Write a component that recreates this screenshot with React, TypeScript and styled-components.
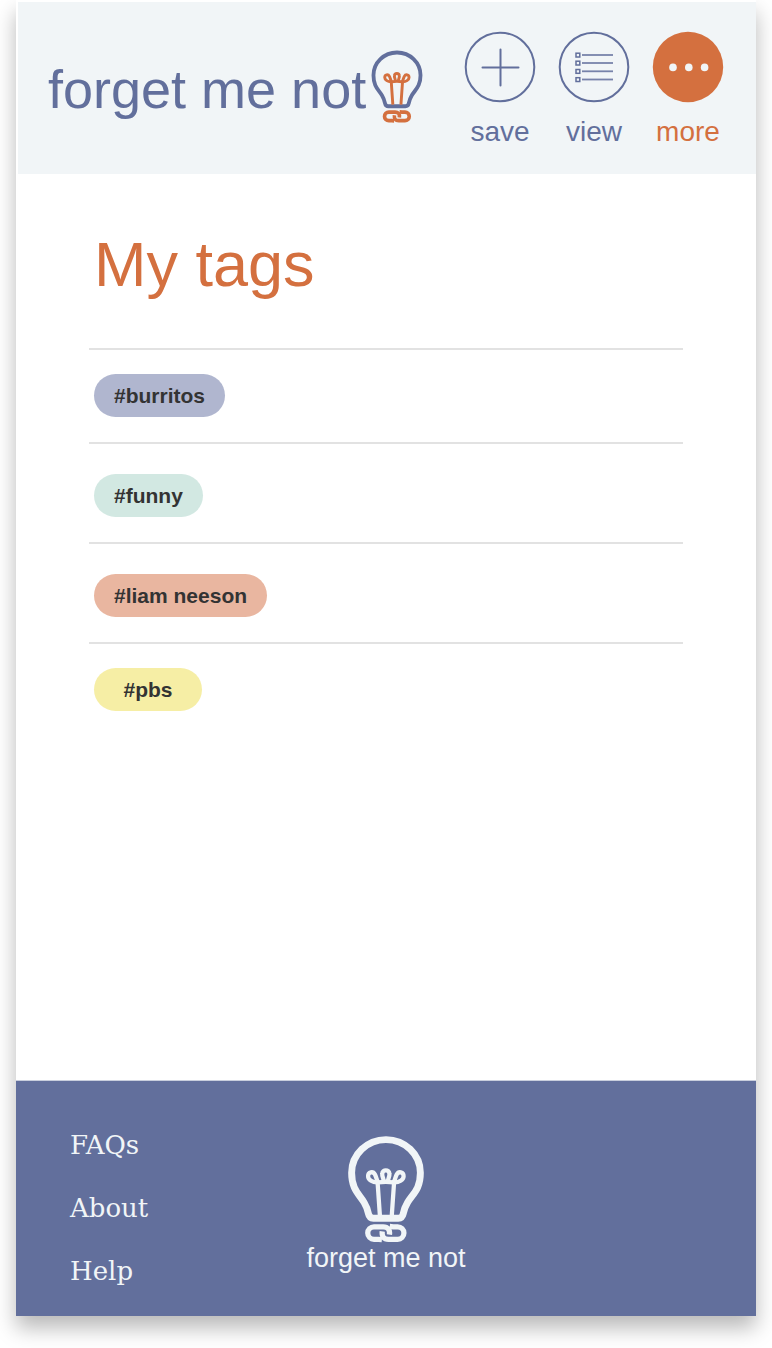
import React from "react";
import styled, { createGlobalStyle } from "styled-components";

const color = {
  indigo: "#626f9c",
  orange: "#d4703f",
  mist: "#f1f5f7",
  rule: "#e2e2e2",
  ink: "#333333",
};

const sans = `"Liberation Sans", Arial, sans-serif`;
const slab = `"DejaVu Serif", serif`;

const GlobalStyle = createGlobalStyle`
  *, *::before, *::after { box-sizing: border-box; }
  body { margin: 0; background: #fff; font-family: ${sans}; }
`;

const Card = styled.div`
  display: flex;
  flex-direction: column;
  min-height: calc(100vh - 32px);
  margin: 0 16px 32px;
  background: #fff;
  box-shadow: 0 12px 20px rgba(0, 0, 0, 0.28);
`;

const Header = styled.header`
  display: flex;
  flex-wrap: wrap;
  justify-content: space-between;
  align-items: flex-start;
  gap: 24px;
  min-height: 172px;
  margin: 2px 0 0 2px;
  padding: 30px 33px 24px 30px;
  background: ${color.mist};
`;

const Brand = styled.a`
  display: flex;
  align-items: flex-start;
  gap: 5px;
  padding-top: 18px;
  color: ${color.indigo};
  text-decoration: none;
`;

const BrandName = styled.span<{ $large?: boolean }>`
  font-size: ${(p) => (p.$large ? 54 : 27)}px;
  line-height: ${(p) => (p.$large ? 78 : 30)}px;
  white-space: nowrap;
`;

const BulbSvg = styled.svg<{ $width: number }>`
  display: block;
  flex: none;
  width: ${(p) => p.$width}px;
  height: auto;
`;

const Nav = styled.nav`
  display: flex;
  gap: 24px;
`;

const NavButton = styled.button<{ $active?: boolean }>`
  display: flex;
  flex-direction: column;
  align-items: center;
  gap: 12px;
  width: 70px;
  padding: 0;
  border: 0;
  background: none;
  color: ${(p) => (p.$active ? color.orange : color.indigo)};
  font-family: ${sans};
  font-size: 28px;
  line-height: 36px;
  cursor: pointer;
`;

const NavIcon = styled.svg`
  display: block;
  width: 70px;
  height: 70px;
  overflow: visible;
`;

const Main = styled.main`
  flex: 1;
  padding: 48px 73px;
`;

const Title = styled.h1`
  margin: 0 0 42px;
  padding-left: 5px;
  color: ${color.orange};
  font-size: 63px;
  font-weight: 400;
  line-height: 84px;
`;

const TagList = styled.ul`
  margin: 0;
  padding: 0;
  list-style: none;
`;

const TagRow = styled.li<{ $roomy?: boolean }>`
  display: flex;
  padding: ${(p) => (p.$roomy ? 30 : 24)}px 5px 25px;
  border-top: 2px solid ${color.rule};
`;

const Tag = styled.a<{ $fill: string }>`
  min-width: 108px;
  padding: 0 20px;
  border-radius: 22px;
  background: ${(p) => p.$fill};
  color: ${color.ink};
  font-size: 21px;
  font-weight: 700;
  line-height: 43px;
  text-align: center;
  text-decoration: none;
`;

const Footer = styled.footer`
  display: grid;
  grid-template-columns: 1fr auto 1fr;
  min-height: 236px;
  padding: 46px 54px 26px;
  border-top: 1px solid #c9cedd;
  background: ${color.indigo};
`;

const FooterLinks = styled.nav`
  display: flex;
  flex-direction: column;
  align-items: flex-start;
  gap: 27px;
`;

const FooterLink = styled.a`
  color: ${color.mist};
  font-family: ${slab};
  font-size: 26px;
  line-height: 36px;
  text-decoration: none;
`;

const FooterBrand = styled.a`
  display: flex;
  flex-direction: column;
  align-items: center;
  padding-top: 9px;
  color: ${color.mist};
  text-decoration: none;
`;

type BulbProps = {
  width: number;
  glass: string;
  filament: string;
  glassWidth: number;
};

function Bulb({ width, glass, filament, glassWidth }: BulbProps) {
  return (
    <BulbSvg $width={width} viewBox="173 46 231 326" fill="none" aria-hidden="true">
      <path
        stroke={glass}
        strokeWidth={glassWidth}
        strokeLinejoin="round"
        d="M184 158C184 208 206 222 222 248C232 265 233 272 235 282Q238 296 250 296H326Q338 296 341 282C343 272 344 265 354 248C370 222 393 208 393 158A104.5 101 0 0 0 184 158Z"
      />
      <g stroke={filament} strokeWidth="13" strokeLinejoin="round">
        <path d="M263 188L270 289M313 188L306 289" />
        <path d="M264 187C248 188 234 179 234 168C234 155 249 152 255 163C259 171 260 179 264 187Q288 184 312 187C316 179 317 171 321 163C327 152 342 155 342 168C342 179 328 188 312 187" />
        <path d="M282 187C283 177 276 170 277 161C278 147 298 147 299 161C300 170 293 177 294 187" />
      </g>
      <g stroke={filament} strokeWidth="16">
        <path d="M276 361L266 360H252A19 19 0 0 1 252 322H280C294 322 301 330 299 346" />
        <path d="M300 321L310 322H324A19 19 0 0 1 324 360H296C282 360 275 352 277 336" />
      </g>
    </BulbSvg>
  );
}

function SaveIcon() {
  return (
    <NavIcon viewBox="-35 -35 70 70" fill="none" stroke="currentColor" strokeWidth="2" aria-hidden="true">
      <circle r="34.3" />
      <path d="M-17.5 .5H18.5M.5 -17.5V18.5" strokeLinecap="round" />
    </NavIcon>
  );
}

function ViewIcon() {
  return (
    <NavIcon viewBox="-35 -35 70 70" fill="none" stroke="currentColor" aria-hidden="true">
      <circle r="34.3" strokeWidth="2" />
      {[-12, -4, 4.3, 12.5].map((y) => (
        <g key={y}>
          <rect x="-18" y={y - 1.8} width="3.8" height="3.8" strokeWidth="1.5" />
          <path d={`M-12 ${y}H19`} strokeWidth="1.8" opacity="0.85" />
        </g>
      ))}
    </NavIcon>
  );
}

function MoreIcon() {
  return (
    <NavIcon viewBox="-35 -35 70 70" aria-hidden="true">
      <circle r="35.2" fill={color.orange} />
      {[-15, 0.8, 16.6].map((x) => (
        <circle key={x} cx={x} cy="0.4" r="3.8" fill={color.mist} />
      ))}
    </NavIcon>
  );
}

const tags = [
  { label: "#burritos", fill: "#b0b6cf", roomy: false },
  { label: "#funny", fill: "#d2e8e2", roomy: true },
  { label: "#liam neeson", fill: "#e9b6a0", roomy: true },
  { label: "#pbs", fill: "#f6eea5", roomy: false },
];

const links = ["FAQs", "About", "Help"];

export default function App() {
  return (
    <>
      <GlobalStyle />
      <Card>
        <Header>
          <Brand href="#home">
            <BrandName $large>forget me not</BrandName>
            <Bulb width={52} glass={color.indigo} filament={color.orange} glassWidth={17} />
          </Brand>
          <Nav aria-label="Main">
            <NavButton type="button">
              <SaveIcon />
              save
            </NavButton>
            <NavButton type="button">
              <ViewIcon />
              view
            </NavButton>
            <NavButton type="button" $active aria-current="page">
              <MoreIcon />
              more
            </NavButton>
          </Nav>
        </Header>
        <Main>
          <Title>My tags</Title>
          <TagList>
            {tags.map((tag) => (
              <TagRow key={tag.label} $roomy={tag.roomy}>
                <Tag href="#tag" $fill={tag.fill}>{tag.label}</Tag>
              </TagRow>
            ))}
          </TagList>
        </Main>
        <Footer>
          <FooterLinks aria-label="Footer">
            {links.map((label) => (
              <FooterLink key={label} href={`#${label.toLowerCase()}`}>{label}</FooterLink>
            ))}
          </FooterLinks>
          <FooterBrand href="#home">
            <Bulb width={76} glass={color.mist} filament={color.mist} glassWidth={21} />
            <BrandName>forget me not</BrandName>
          </FooterBrand>
        </Footer>
      </Card>
    </>
  );
}
